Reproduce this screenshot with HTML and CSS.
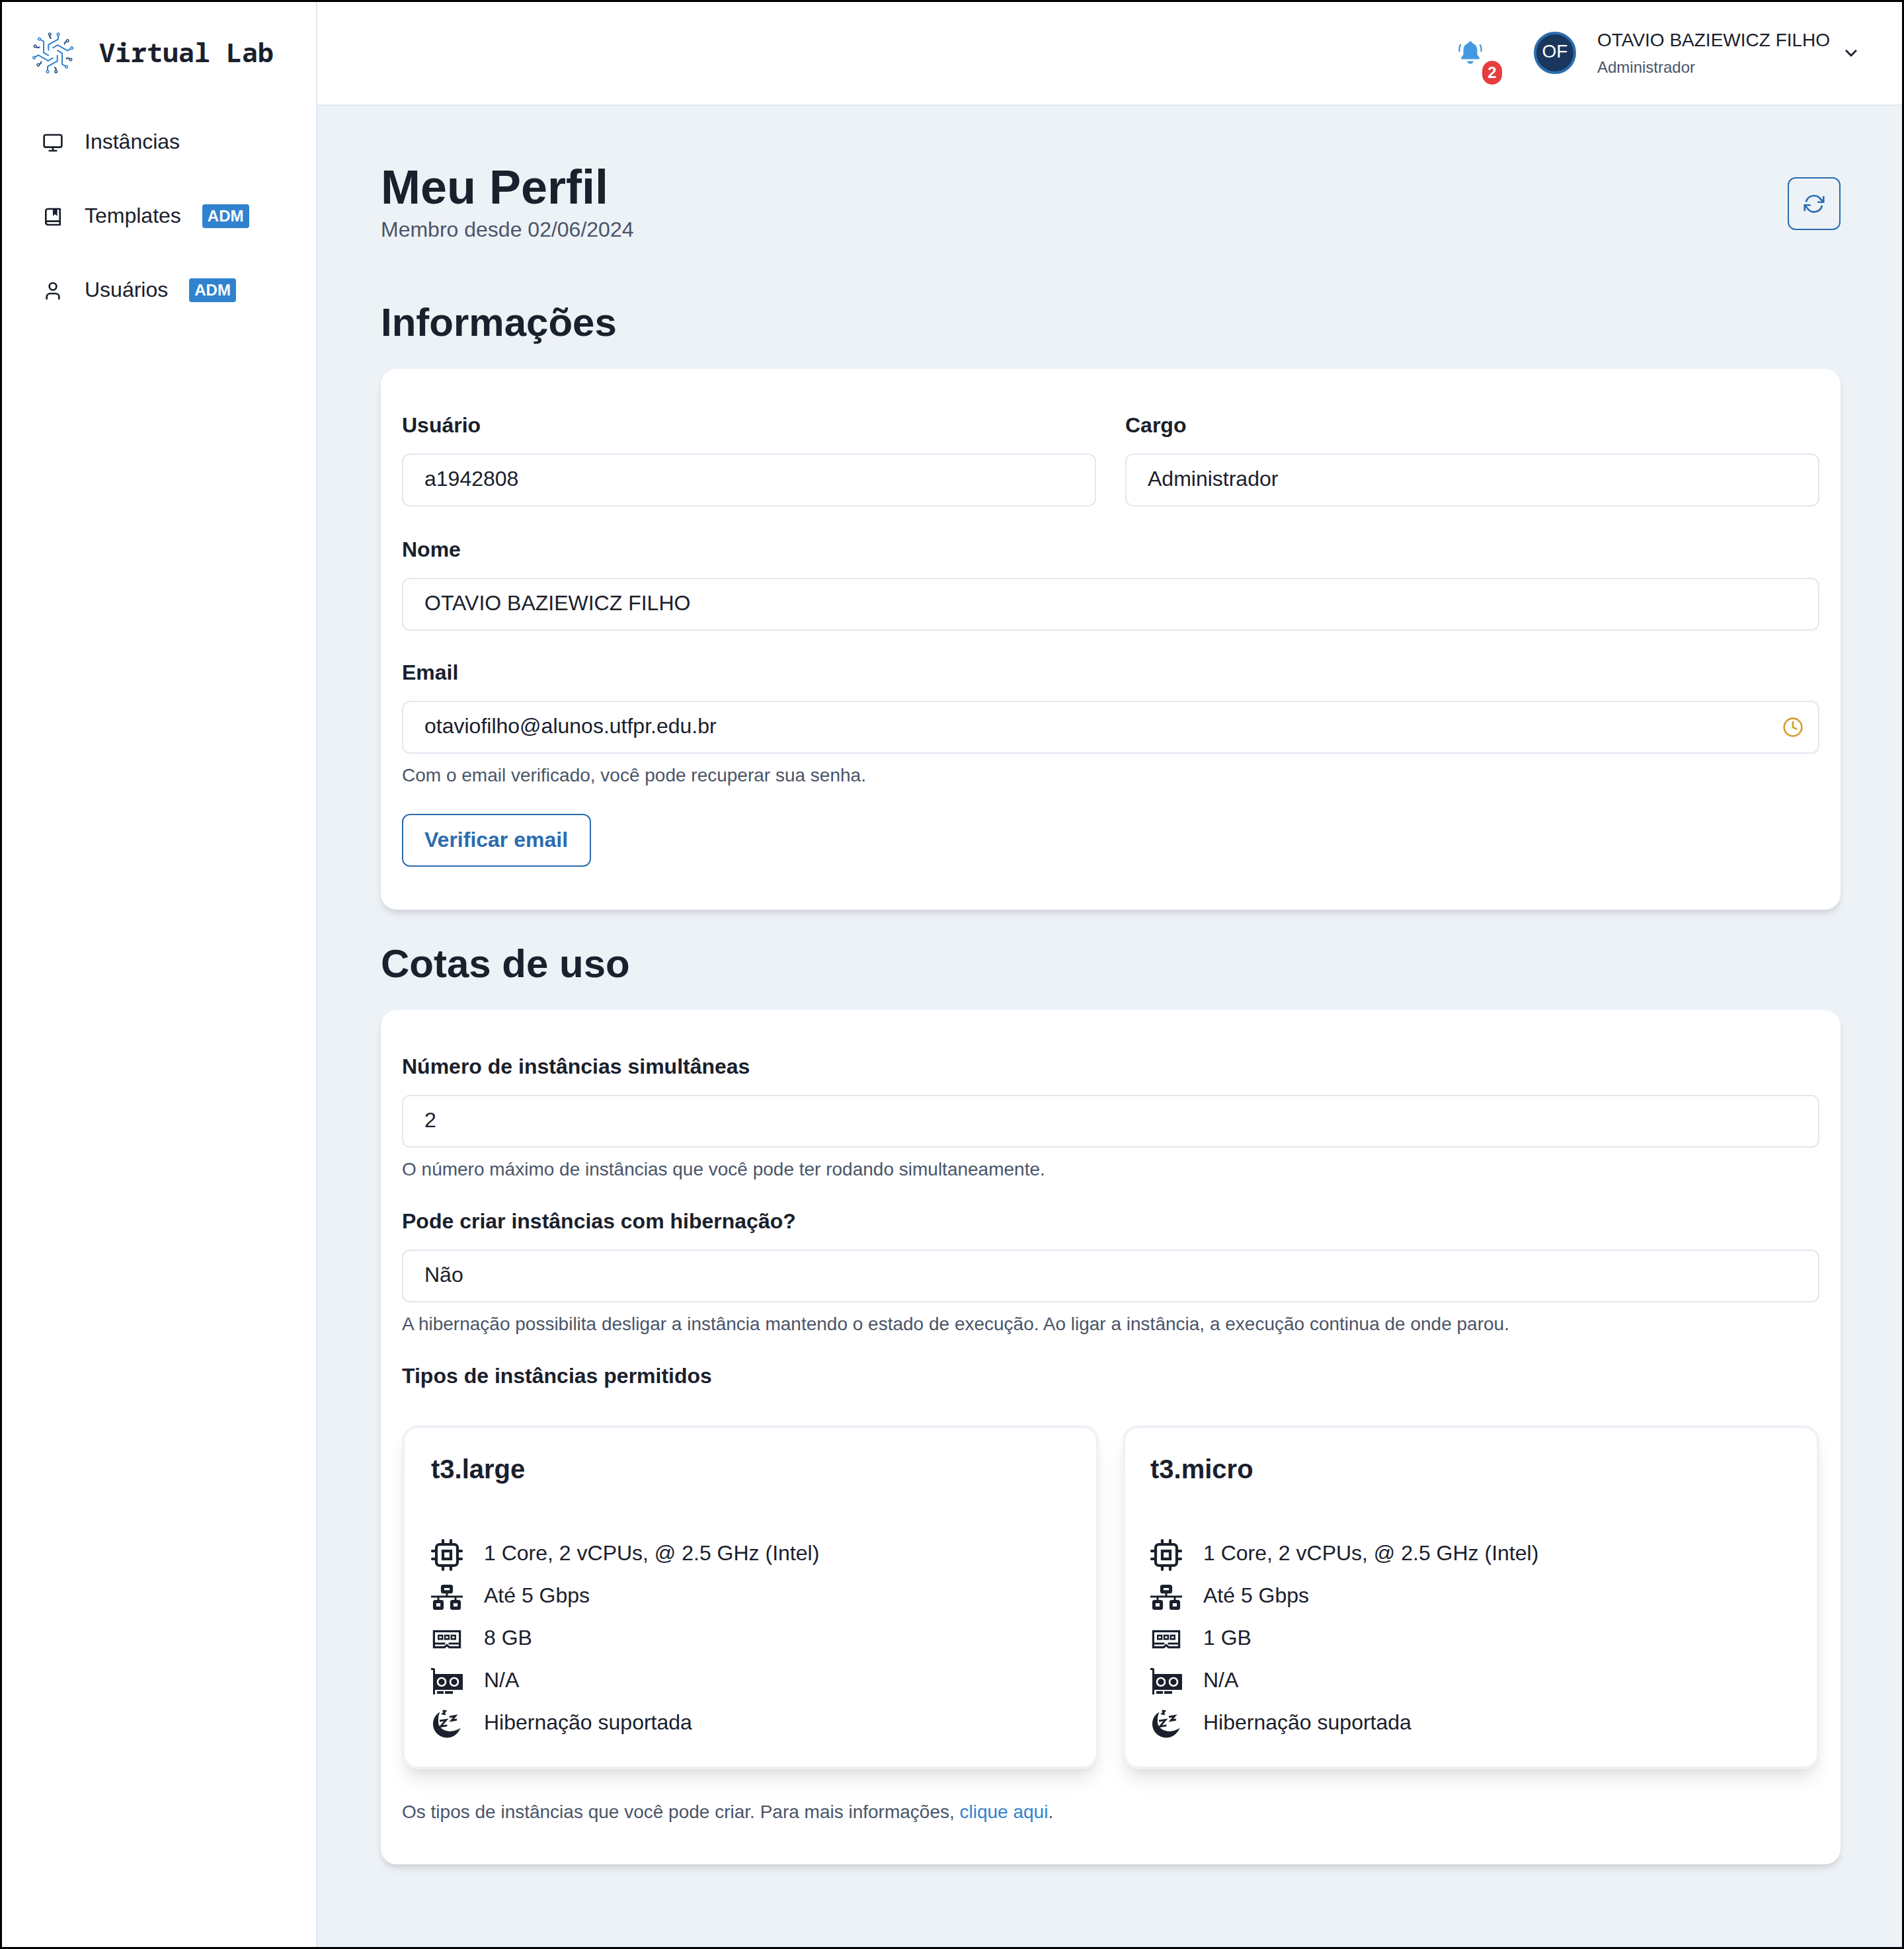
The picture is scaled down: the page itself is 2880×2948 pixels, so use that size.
FILE: index.html
```html
<!DOCTYPE html>
<html lang="pt-BR">
<head>
<meta charset="utf-8">
<title>Virtual Lab</title>
<link rel="stylesheet" href="styles.css">
</head>
<body>
<svg class="defs" width="0" height="0" aria-hidden="true">
  <defs>
    <symbol id="i-cpu" viewBox="0 0 24 24"><g fill="none" stroke="#1a202c" stroke-width="2.100" stroke-linecap="round"><rect x="4" y="4" width="16" height="16" rx="2.500"/><rect x="9" y="9" width="6" height="6"/><path d="M9 1v3M15 1v3M9 20v3M15 20v3M1 9h3M1 15h3M20 9h3M20 15h3"/></g></symbol>
    <symbol id="i-net" viewBox="0 0 24 24"><g fill="none" stroke="#1a202c"><g stroke-width="2.500"><rect x="8.700" y="3.700" width="6.600" height="4.200" rx=".5"/><rect x="2.700" y="15.200" width="5.600" height="5.100" rx=".5"/><rect x="15.700" y="15.200" width="5.600" height="5.100" rx=".5"/></g><path stroke-width="1.500" d="M12 9v2.500M0 11.500h24M5.500 11.500V14M18.500 11.500V14"/></g></symbol>
    <symbol id="i-ram" viewBox="0 0 24 24"><g fill="none" stroke="#1a202c" stroke-width="1.600"><path d="M2.200 5.700h19.600v12.100H13.800L12 16.200l-1.800 1.600H2.200zM2.200 15h8.500M13.300 15h8.500"/></g><path fill="#1a202c" fill-rule="evenodd" d="M5 8.300h4.200v3.900H5zM6.200 9.600v1.300h1.800V9.600zM9.900 8.300h4.200v3.900H9.900zM11.100 9.600v1.300h1.800V9.600zM14.800 8.300h4.200v3.900h-4.200zM16 9.600v1.300h1.800V9.600z"/></symbol>
    <symbol id="i-gpu" viewBox="0 0 24 24"><path fill="#1a202c" d="M0 1.500h1.800A1.200 1.200 0 0 1 3 2.700V21.500H1.500V3H0z"/><path fill="#1a202c" d="M3 6h20.500a.5.500 0 0 1 .5.500V18H3z"/><g fill="#1a202c" stroke="#fff" stroke-width="1.300"><circle cx="8" cy="12" r="3"/><circle cx="17.500" cy="12" r="3"/></g><path fill="#1a202c" d="M4.500 19h5v2h-5zM10.500 19h6v2h-6z"/></symbol>
    <symbol id="i-moon" viewBox="0 0 24 24"><path fill="#1a202c" d="M6.800 2.700C3.500 4.500 1.500 7.800 1.500 11.800 1.500 17.600 6.200 22.200 12 22.200c4.600 0 8.500-3 10.300-7.500-2.500 1.900-6.100 3-9.600 2.500-4.200-.7-7.100-3.400-7.200-6.700-.1-3 0-5.500 1.300-7.800z"/><g fill="none" stroke="#1a202c" stroke-width="1.400"><path d="M8.800 1.800l2 .3-1.800 2 2 .4M14 6.500l4.500-.8-3 3.500 4-.7M6.500 9.500l5-.8-4.300 5 5-.8"/></g></symbol>
    <g id="arm" fill="none" stroke-width="2">
      <path stroke="#3182ce" d="M-6.700-3.300V-12.300L8-20.700V-26.600"/>
      <circle cx="8" cy="-28.300" r="1.800" stroke="#3182ce" stroke-width="1.500" fill="#fff"/>
      <path stroke="#2c5282" d="M-4.700-26.600V-24L-2.300-21.300"/>
      <circle cx="-4.700" cy="-28.300" r="1.800" stroke="#2c5282" stroke-width="1.500" fill="#fff"/>
    </g>
  </defs>
</svg>

<div class="app">
  <aside class="sidebar">
    <div class="brand">
      <svg class="brand-logo" viewBox="-32 -32 64 64">
        <use href="#arm"/>
        <use href="#arm" transform="rotate(60)"/>
        <use href="#arm" transform="rotate(120)"/>
        <use href="#arm" transform="rotate(180)"/>
        <use href="#arm" transform="rotate(240)"/>
        <use href="#arm" transform="rotate(300)"/>
      </svg>
      <span class="brand-name">Virtual Lab</span>
    </div>
    <nav class="nav">
      <a class="nav-item">
        <svg class="nav-icon" viewBox="0 0 24 24"><rect x="2" y="3" width="20" height="14" rx="2"/><path d="M8 21h8M12 17v4"/></svg>
        <span>Instâncias</span>
      </a>
      <a class="nav-item">
        <svg class="nav-icon" viewBox="0 0 24 24"><path d="M4 19.500v-15A2.500 2.500 0 0 1 6.500 3H20v18H6.500a2.500 2.500 0 0 1-2.500-2.500zM4 19a2 2 0 0 1 2-2h14"/><path class="nav-icon-fill" d="M12 3h5v8l-2.500-2-2.500 2z"/></svg>
        <span>Templates</span>
        <span class="adm">ADM</span>
      </a>
      <a class="nav-item">
        <svg class="nav-icon" viewBox="0 0 24 24"><path d="M19 21v-2a4 4 0 0 0-4-4H9a4 4 0 0 0-4 4v2"/><circle cx="12" cy="7" r="4"/></svg>
        <span>Usuários</span>
        <span class="adm">ADM</span>
      </a>
    </nav>
  </aside>

  <div class="column">
    <header class="topbar">
      <div class="bell">
        <svg class="bell-icon" viewBox="0 0 24 24"><path fill="#4299e1" d="M12 2.500c.9 0 1.500.6 1.600 1.400 2.600.7 4.100 3 4.100 5.800v3.800l1.800 2.500c.3.500 0 1.200-.6 1.200H5.100c-.6 0-.9-.7-.6-1.200l1.800-2.500V9.700c0-2.800 1.500-5.100 4.100-5.800.1-.8.700-1.400 1.600-1.400zM9.500 18.800h5c0 1.300-1.100 2.200-2.500 2.200s-2.500-.9-2.500-2.200z"/><path fill="none" stroke="#4299e1" stroke-width="1.300" stroke-linecap="round" d="M3.800 5.500C3 7 2.700 8.500 3 10.500M20.200 5.500c.8 1.500 1.100 3 .8 5"/></svg>
        <span class="bell-count">2</span>
      </div>
      <div class="avatar">OF</div>
      <div class="who">
        <div class="who-name">OTAVIO BAZIEWICZ FILHO</div>
        <div class="who-role">Administrador</div>
      </div>
      <svg class="chev" viewBox="0 0 24 24"><path d="M6 9l6 6 6-6"/></svg>
    </header>

    <main class="main">
      <div class="page-head">
        <div>
          <h1 class="page-title">Meu Perfil</h1>
          <p class="page-sub">Membro desde 02/06/2024</p>
        </div>
        <button class="refresh" type="button">
          <svg viewBox="0 0 24 24"><path d="M2.800 10A9 9 0 0 1 12 3a9 9 0 0 1 6.500 2.800L22.700 10.300"/><path d="M22.700 3.500v6.800H16"/><path d="M21 14a9 9 0 0 1-9 7.500 9 9 0 0 1-6.500-2.800L1.300 13.700"/><path d="M8 13.700H1.300v6.800"/></svg>
        </button>
      </div>

      <h2 class="section-title first">Informações</h2>
      <section class="card card-info">
        <div class="two">
          <div class="field">
            <div class="label">Usuário</div>
            <div class="input">a1942808</div>
          </div>
          <div class="field">
            <div class="label">Cargo</div>
            <div class="input">Administrador</div>
          </div>
        </div>
        <div class="field gap-a">
          <div class="label">Nome</div>
          <div class="input">OTAVIO BAZIEWICZ FILHO</div>
        </div>
        <div class="field gap-b">
          <div class="label">Email</div>
          <div class="input input-icon">otaviofilho@alunos.utfpr.edu.br
            <svg class="clock" viewBox="0 0 24 24"><circle cx="12" cy="12" r="10"/><path d="M12 6v6l4 2"/></svg>
          </div>
          <p class="help">Com o email verificado, você pode recuperar sua senha.</p>
        </div>
        <button class="verify" type="button">Verificar email</button>
      </section>

      <h2 class="section-title second">Cotas de uso</h2>
      <section class="card card-quota">
        <div class="field">
          <div class="label">Número de instâncias simultâneas</div>
          <div class="input">2</div>
          <p class="help">O número máximo de instâncias que você pode ter rodando simultaneamente.</p>
        </div>
        <div class="field gap-c">
          <div class="label">Pode criar instâncias com hibernação?</div>
          <div class="input">Não</div>
          <p class="help">A hibernação possibilita desligar a instância mantendo o estado de execução. Ao ligar a instância, a execução continua de onde parou.</p>
        </div>
        <div class="field gap-d">
          <div class="label label-types">Tipos de instâncias permitidos</div>
          <div class="types">
            <article class="type">
              <h3 class="type-name">t3.large</h3>
              <ul class="specs">
                <li class="spec"><svg class="spec-icon"><use href="#i-cpu"/></svg><span>1 Core, 2 vCPUs, @ 2.5 GHz (Intel)</span></li>
                <li class="spec"><svg class="spec-icon"><use href="#i-net"/></svg><span>Até 5 Gbps</span></li>
                <li class="spec"><svg class="spec-icon"><use href="#i-ram"/></svg><span>8 GB</span></li>
                <li class="spec"><svg class="spec-icon"><use href="#i-gpu"/></svg><span>N/A</span></li>
                <li class="spec"><svg class="spec-icon"><use href="#i-moon"/></svg><span>Hibernação suportada</span></li>
              </ul>
            </article>
            <article class="type">
              <h3 class="type-name">t3.micro</h3>
              <ul class="specs">
                <li class="spec"><svg class="spec-icon"><use href="#i-cpu"/></svg><span>1 Core, 2 vCPUs, @ 2.5 GHz (Intel)</span></li>
                <li class="spec"><svg class="spec-icon"><use href="#i-net"/></svg><span>Até 5 Gbps</span></li>
                <li class="spec"><svg class="spec-icon"><use href="#i-ram"/></svg><span>1 GB</span></li>
                <li class="spec"><svg class="spec-icon"><use href="#i-gpu"/></svg><span>N/A</span></li>
                <li class="spec"><svg class="spec-icon"><use href="#i-moon"/></svg><span>Hibernação suportada</span></li>
              </ul>
            </article>
          </div>
          <p class="help help-types">Os tipos de instâncias que você pode criar. Para mais informações, <a class="link">clique aqui</a>.</p>
        </div>
      </section>
    </main>
  </div>
</div>
</body>
</html>
```

FILE: styles.css
```css
* { box-sizing: border-box; }
html, body { margin: 0; padding: 0; }
body {
  font-family: "Liberation Sans", Arial, sans-serif;
  font-size: 32px;
  line-height: 48px;
  color: #1a202c;
  background: #edf2f7;
}
.defs { display: block; height: 0; }
.app {
  display: grid;
  grid-template-columns: 480px 1fr;
  height: 2948px;
  outline: 3px solid #000;
  outline-offset: -3px;
}

/* sidebar */
.sidebar {
  background: #fff;
  border-right: 2px solid #e2e8f0;
}
.brand {
  display: flex;
  align-items: center;
  gap: 38px;
  height: 160px;
  padding-left: 48px;
}
.brand-logo { width: 64px; height: 64px; flex: none; }
.brand-name {
  margin-bottom: 3px;
  font-family: "Noto Sans Mono", "DejaVu Sans Mono", monospace;
  font-weight: 700;
  font-size: 40px;
}
.nav {
  display: flex;
  flex-direction: column;
  gap: 64px;
  padding: 30px 0 0 64px;
}
.nav-item { display: flex; align-items: center; height: 48px; }
.nav-icon {
  width: 32px;
  height: 32px;
  margin: 4px 32px 0 0;
  flex: none;
  fill: none;
  stroke: #1a202c;
  stroke-width: 2;
  stroke-linecap: round;
  stroke-linejoin: round;
}
.nav-icon-fill { fill: #1a202c; stroke: none; }
.adm {
  margin: 2px 0 0 32px;
  height: 36px;
  padding: 0 8px;
  border-radius: 4px;
  background: #3182ce;
  color: #fff;
  font-size: 24px;
  font-weight: 700;
  line-height: 36px;
}

/* top bar */
.column { display: flex; flex-direction: column; min-width: 0; }
.topbar {
  display: flex;
  align-items: center;
  justify-content: flex-end;
  height: 160px;
  padding-right: 64px;
  background: #fff;
  border-bottom: 2px solid #e2e8f0;
}
.bell { position: relative; width: 40px; height: 40px; margin: 2px 76px 0 0; }
.bell-icon { display: block; width: 44px; height: 44px; margin-left: -2px; margin-top: -2px; }
.bell-count {
  position: absolute;
  left: 38px;
  top: 32px;
  width: 30px;
  height: 36px;
  border-radius: 18px;
  background: #e53e3e;
  color: #fff;
  font-size: 24px;
  font-weight: 700;
  line-height: 36px;
  text-align: center;
}
.avatar {
  width: 64px;
  height: 64px;
  margin-top: 2px;
  border: 4px solid #2b6cb0;
  border-radius: 50%;
  background: #1a365d;
  color: #fff;
  font-size: 28px;
  line-height: 52px;
  text-align: center;
}
.who { margin: 3px 12px 0 32px; width: 356px; }
.who-name { font-size: 28px; line-height: 40px; }
.who-role { font-size: 24px; line-height: 36px; margin-top: 3px; color: #4a5568; }
.chev {
  width: 32px;
  height: 32px;
  margin-top: 2px;
  flex: none;
  fill: none;
  stroke: #1a202c;
  stroke-width: 2;
}

/* main */
.main { padding: 86px 96px 0; }
.page-head { display: flex; align-items: center; justify-content: space-between; }
.page-title { margin: 0; font-size: 72px; line-height: 74px; font-weight: 700; }
.page-sub { margin: 3px 0 -1px; color: #4a5568; }
.refresh {
  display: flex;
  align-items: center;
  justify-content: center;
  width: 80px;
  height: 80px;
  padding: 0;
  border: 2px solid #2b6cb0;
  border-radius: 12px;
  background: transparent;
}
.refresh svg {
  width: 32px;
  height: 32px;
  fill: none;
  stroke: #2b6cb0;
  stroke-width: 2;
  stroke-linecap: butt;
  stroke-linejoin: miter;
}
.section-title { margin: 0 0 34px; font-size: 60px; line-height: 72px; font-weight: 700; }
.section-title.first { margin-top: 82px; }
.section-title.second { margin-top: 46px; }
.card {
  background: #fff;
  border-radius: 24px;
  box-shadow: 0 8px 12px -2px rgba(0, 0, 0, .1), 0 4px 8px -2px rgba(0, 0, 0, .06);
  padding: 61px 32px 0;
}
.card-info { height: 818px; }
.card-quota { height: 1292px; }
.two { display: grid; grid-template-columns: 1fr 1fr; gap: 44px; }
.label { font-weight: 700; margin-bottom: 19px; }
.input {
  position: relative;
  height: 80px;
  padding: 0 32px;
  border: 2px solid #e2e8f0;
  border-radius: 12px;
  line-height: 72px;
  background: #fff;
}
.clock {
  position: absolute;
  right: 22px;
  top: 22px;
  width: 32px;
  height: 32px;
  fill: none;
  stroke: #d69e2e;
  stroke-width: 2;
  stroke-linecap: round;
  stroke-linejoin: round;
}
.help { margin: 12px 0 0; font-size: 28px; line-height: 42px; color: #4a5568; }
.gap-a { margin-top: 41px; }
.gap-b { margin-top: 39px; }
.gap-c { margin-top: 33px; }
.gap-d { margin-top: 33px; }
.verify {
  display: block;
  height: 80px;
  margin-top: 37px;
  padding: 0 33px 2px 32px;
  border: 2px solid #2b6cb0;
  border-radius: 12px;
  background: #fff;
  color: #2b6cb0;
  font: 700 32px/48px "Liberation Sans", Arial, sans-serif;
}

/* instance types */
.label-types { margin-bottom: 51px; }
.types { display: grid; grid-template-columns: 1054px 1054px; gap: 36px; }
.type {
  height: 520px;
  padding: 38px 40px 0;
  border: 4px solid #edf2f7;
  border-radius: 24px;
  background: #fff;
  box-shadow: 0 20px 30px -6px rgba(0, 0, 0, .1), 0 8px 12px -4px rgba(0, 0, 0, .05);
}
.type + .type { padding-left: 38px; }
.type-name { margin: 0 0 79px; font-size: 40px; line-height: 48px; font-weight: 700; }
.specs { display: flex; flex-direction: column; gap: 16px; margin: 0; padding: 0; list-style: none; }
.spec { display: flex; align-items: center; height: 48px; }
.spec-icon { width: 48px; height: 48px; margin: 6px 32px 0 0; flex: none; }
.help-types { margin-top: 44px; }
.link { color: #3182ce; }
```
